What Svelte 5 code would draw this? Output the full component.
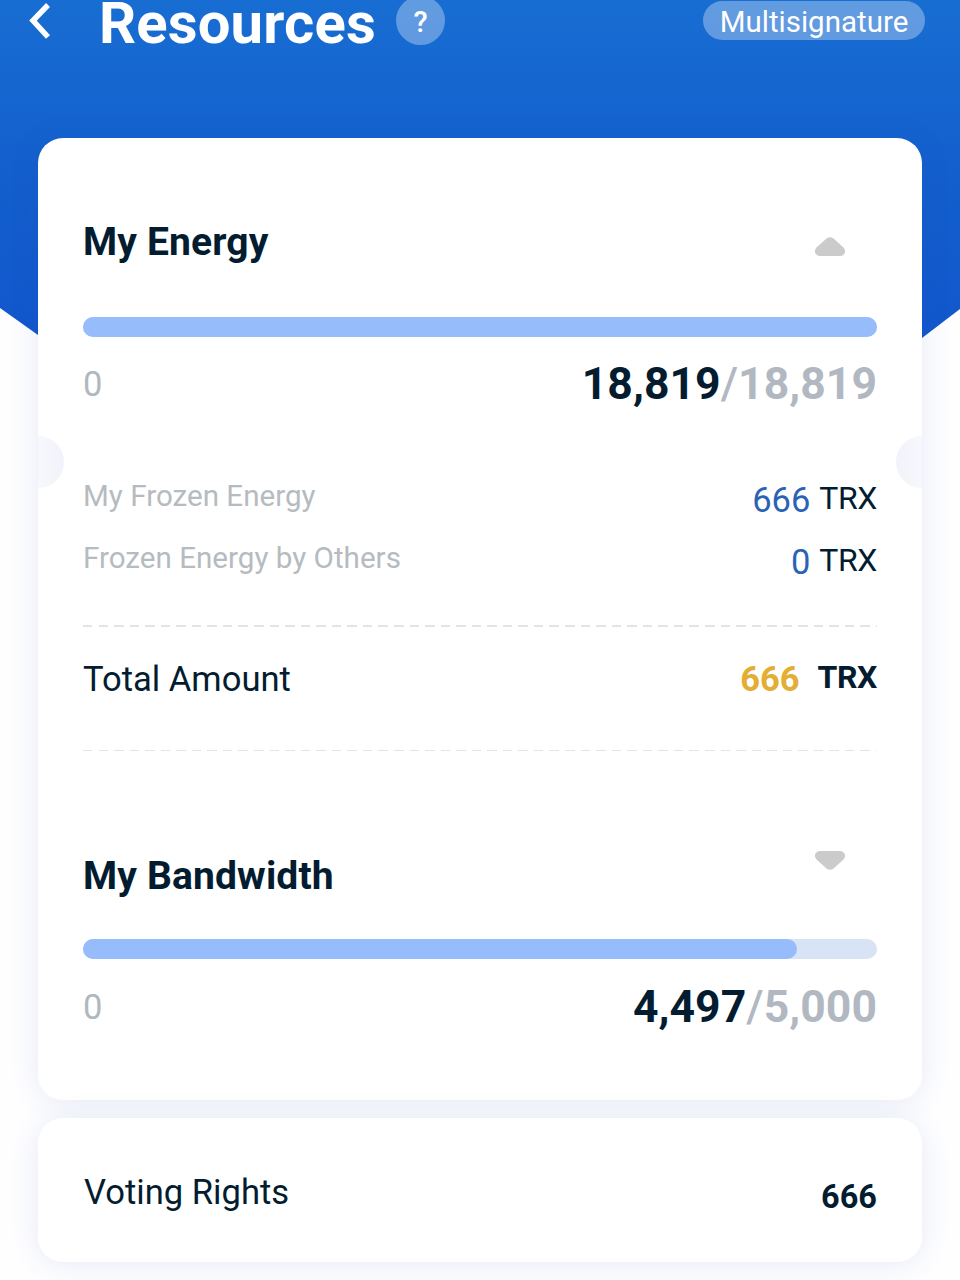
<script>
  const resources = [
    {
      name: 'My Energy',
      used: 18819,
      total: 18819,
      open: true,
      details: [
        { label: 'My Frozen Energy', amount: 666 },
        { label: 'Frozen Energy by Others', amount: 0 }
      ],
      frozen: 666
    },
    { name: 'My Bandwidth', used: 4497, total: 5000, open: false }
  ];

  const votingRights = 666;

  function format(value) {
    return value.toLocaleString('en-US');
  }
</script>

<div class="page">
  <header>
    <svg class="back" width="24" height="40" viewBox="0 0 24 40">
      <path d="M20 3 L5 18.500 L20 35" fill="none" stroke="#fff" stroke-width="5.5" />
    </svg>
    <h1>Resources</h1>
    <span class="help">?</span>
    <span class="multisig">Multisignature</span>
  </header>

  <main>
    <section class="card resources">
      <span class="notch left"></span>
      <span class="notch right"></span>

      {#each resources as item}
        <div class="resource" class:open={item.open}>
          <div class="title-row">
            <h2>{item.name}</h2>
            <svg class="arrow" width="30" height="19" viewBox="0 0 30 19">
              <path
                d="M11.5 1.500 Q15 -1.200 18.500 1.500 L28.500 10.500 Q31 13.500 29.500 16.500 Q28 19 25.500 19 H4.500 Q2 19 0.500 16.500 Q-1 13.500 1.500 10.500 Z"
                fill="#cbcbcb"
              />
            </svg>
          </div>

          <div class="bar">
            <div class="fill" style="width: {(item.used / item.total) * 100}%"></div>
          </div>

          <div class="range">
            <span class="zero">0</span>
            <span class="usage">{format(item.used)}<span class="limit"><span class="slash">/</span>{format(item.total)}</span></span>
          </div>

          {#if item.open}
            <div class="details">
              {#each item.details as detail}
                <div class="row">
                  <span class="label">{detail.label}</span>
                  <span class="amount">{detail.amount}</span>
                  <span class="unit">TRX</span>
                </div>
              {/each}
            </div>
            <div class="divider"></div>
            <div class="row total">
              <span class="label">Total Amount</span>
              <span class="amount">{item.frozen}</span>
              <span class="unit">TRX</span>
            </div>
            <div class="divider thin"></div>
          {/if}
        </div>
      {/each}
    </section>

    <section class="card voting">
      <span class="voting-label">Voting Rights</span>
      <span class="voting-value">{votingRights}</span>
    </section>
  </main>
</div>

<style>
  :global(body) {
    margin: 0;
    background: #fefeff;
  }

  .page {
    position: relative;
    box-sizing: border-box;
    width: 960px;
    height: 1280px;
    overflow: hidden;
    font-family: Roboto, 'Liberation Sans', sans-serif;
    color: #031c30;
    isolation: isolate;
  }

  /* blue backdrop that narrows behind the card */
  .page::before {
    content: '';
    position: absolute;
    z-index: -1;
    inset: 0 0 auto;
    height: 420px;
    background: linear-gradient(180deg, #186dd2 0, #1567cf 80px, #1360ce 160px, #1157cc 340px);
    clip-path: polygon(0 0, 100% 0, 100% 309px, 922px 338px, 800px 420px, 160px 420px, 38px 335px, 0 308px);
  }

  header {
    display: flex;
    align-items: flex-start;
    height: 138px;
    padding: 0 35px 0 28px;
    color: #fff;
  }

  h1,
  h2 {
    margin: 0;
    font-weight: 700;
  }

  .back {
    margin-top: 2px;
  }

  h1 {
    width: 297px;
    margin-left: 47px;
    font-size: 58px;
    line-height: 46px;
    letter-spacing: 0.15px;
  }

  .help {
    width: 49px;
    height: 49px;
    margin-top: -4px;
    border-radius: 50%;
    background: rgba(255, 255, 255, 0.32);
    font-size: 29px;
    font-weight: 500;
    line-height: 53px;
    text-align: center;
  }

  .multisig {
    width: 222px;
    height: 39px;
    margin-top: 1px;
    margin-left: auto;
    border-radius: 20px;
    background: rgba(255, 255, 255, 0.32);
    font-size: 29.5px;
    line-height: 42px;
    text-align: center;
  }

  main {
    display: flex;
    flex-direction: column;
    gap: 18px;
    padding: 0 38px;
  }

  .card {
    position: relative;
    box-sizing: border-box;
    padding: 0 45px;
    border-radius: 25px;
    background: #fff;
    box-shadow: 0 2px 30px rgba(50, 75, 170, 0.11);
  }

  .resources {
    height: 962px;
    padding-top: 73px;
  }

  .notch {
    position: absolute;
    top: 298px;
    width: 26px;
    height: 52px;
    border-radius: 0 26px 26px 0;
    background: linear-gradient(90deg, #f7f8fd, #f2f2fa);
  }

  .notch.left {
    left: 0;
  }

  .notch.right {
    right: 0;
    transform: scaleX(-1);
  }

  .title-row {
    display: flex;
    align-items: center;
    justify-content: space-between;
    height: 63px;
    padding-right: 32px;
  }

  h2 {
    padding-top: 2px;
    font-size: 39px;
    line-height: 61px;
    letter-spacing: 0.15px;
  }

  .open h2 {
    padding-top: 0;
  }

  .arrow {
    margin-bottom: 30px;
    transform: rotate(180deg);
  }

  .open .arrow {
    margin: 8px 0 0;
    transform: none;
  }

  .bar {
    height: 20px;
    margin-top: 32px;
    border-radius: 10px;
    background: #d9e3f6;
  }

  .open .bar {
    margin-top: 43px;
  }

  .fill {
    height: 100%;
    border-radius: 10px;
    background: #96bcfb;
  }

  .range {
    display: flex;
    align-items: center;
    justify-content: space-between;
    height: 46px;
    margin-top: 25px;
  }

  .open .range {
    margin-top: 24px;
  }

  .zero {
    color: #b1b8bd;
    font-size: 34.5px;
  }

  .usage {
    font-size: 44.5px;
    font-weight: 700;
    letter-spacing: 0.05px;
  }

  .limit {
    color: #b2b8c1;
  }

  .slash {
    font-weight: 500;
  }

  .details {
    margin-top: 60px;
  }

  .row {
    display: flex;
    align-items: center;
    height: 62px;
  }

  .row .label {
    margin-right: auto;
    padding-bottom: 5px;
    color: #b6bbc0;
    font-size: 29.6px;
  }

  .row .amount {
    padding-top: 4px;
    color: #2a62b6;
    font-size: 34.5px;
  }

  .row .unit {
    margin-left: 9px;
    font-size: 32px;
    letter-spacing: -0.4px;
  }

  .divider {
    height: 2px;
    margin-top: 34px;
    background: repeating-linear-gradient(90deg, #e2e5e8 0 9.5px, transparent 9.5px 15.55px);
  }

  .divider.thin {
    height: 1px;
    margin: 41px 0 93px;
  }

  .total {
    margin-top: 20px;
  }

  .total .label {
    padding: 1px 0 0;
    color: inherit;
    font-size: 34.6px;
  }

  .total .amount {
    padding-top: 2px;
    color: #e3ae33;
    font-weight: 700;
  }

  .total .unit {
    margin: 0 0 2px 18px;
    font-weight: 700;
  }

  .voting {
    display: flex;
    align-items: center;
    justify-content: space-between;
    height: 144px;
  }

  .voting-label {
    padding: 3px 0 0 1px;
    font-size: 34.6px;
  }

  .voting-value {
    padding-top: 14px;
    font-size: 32.5px;
    font-weight: 700;
  }
</style>
